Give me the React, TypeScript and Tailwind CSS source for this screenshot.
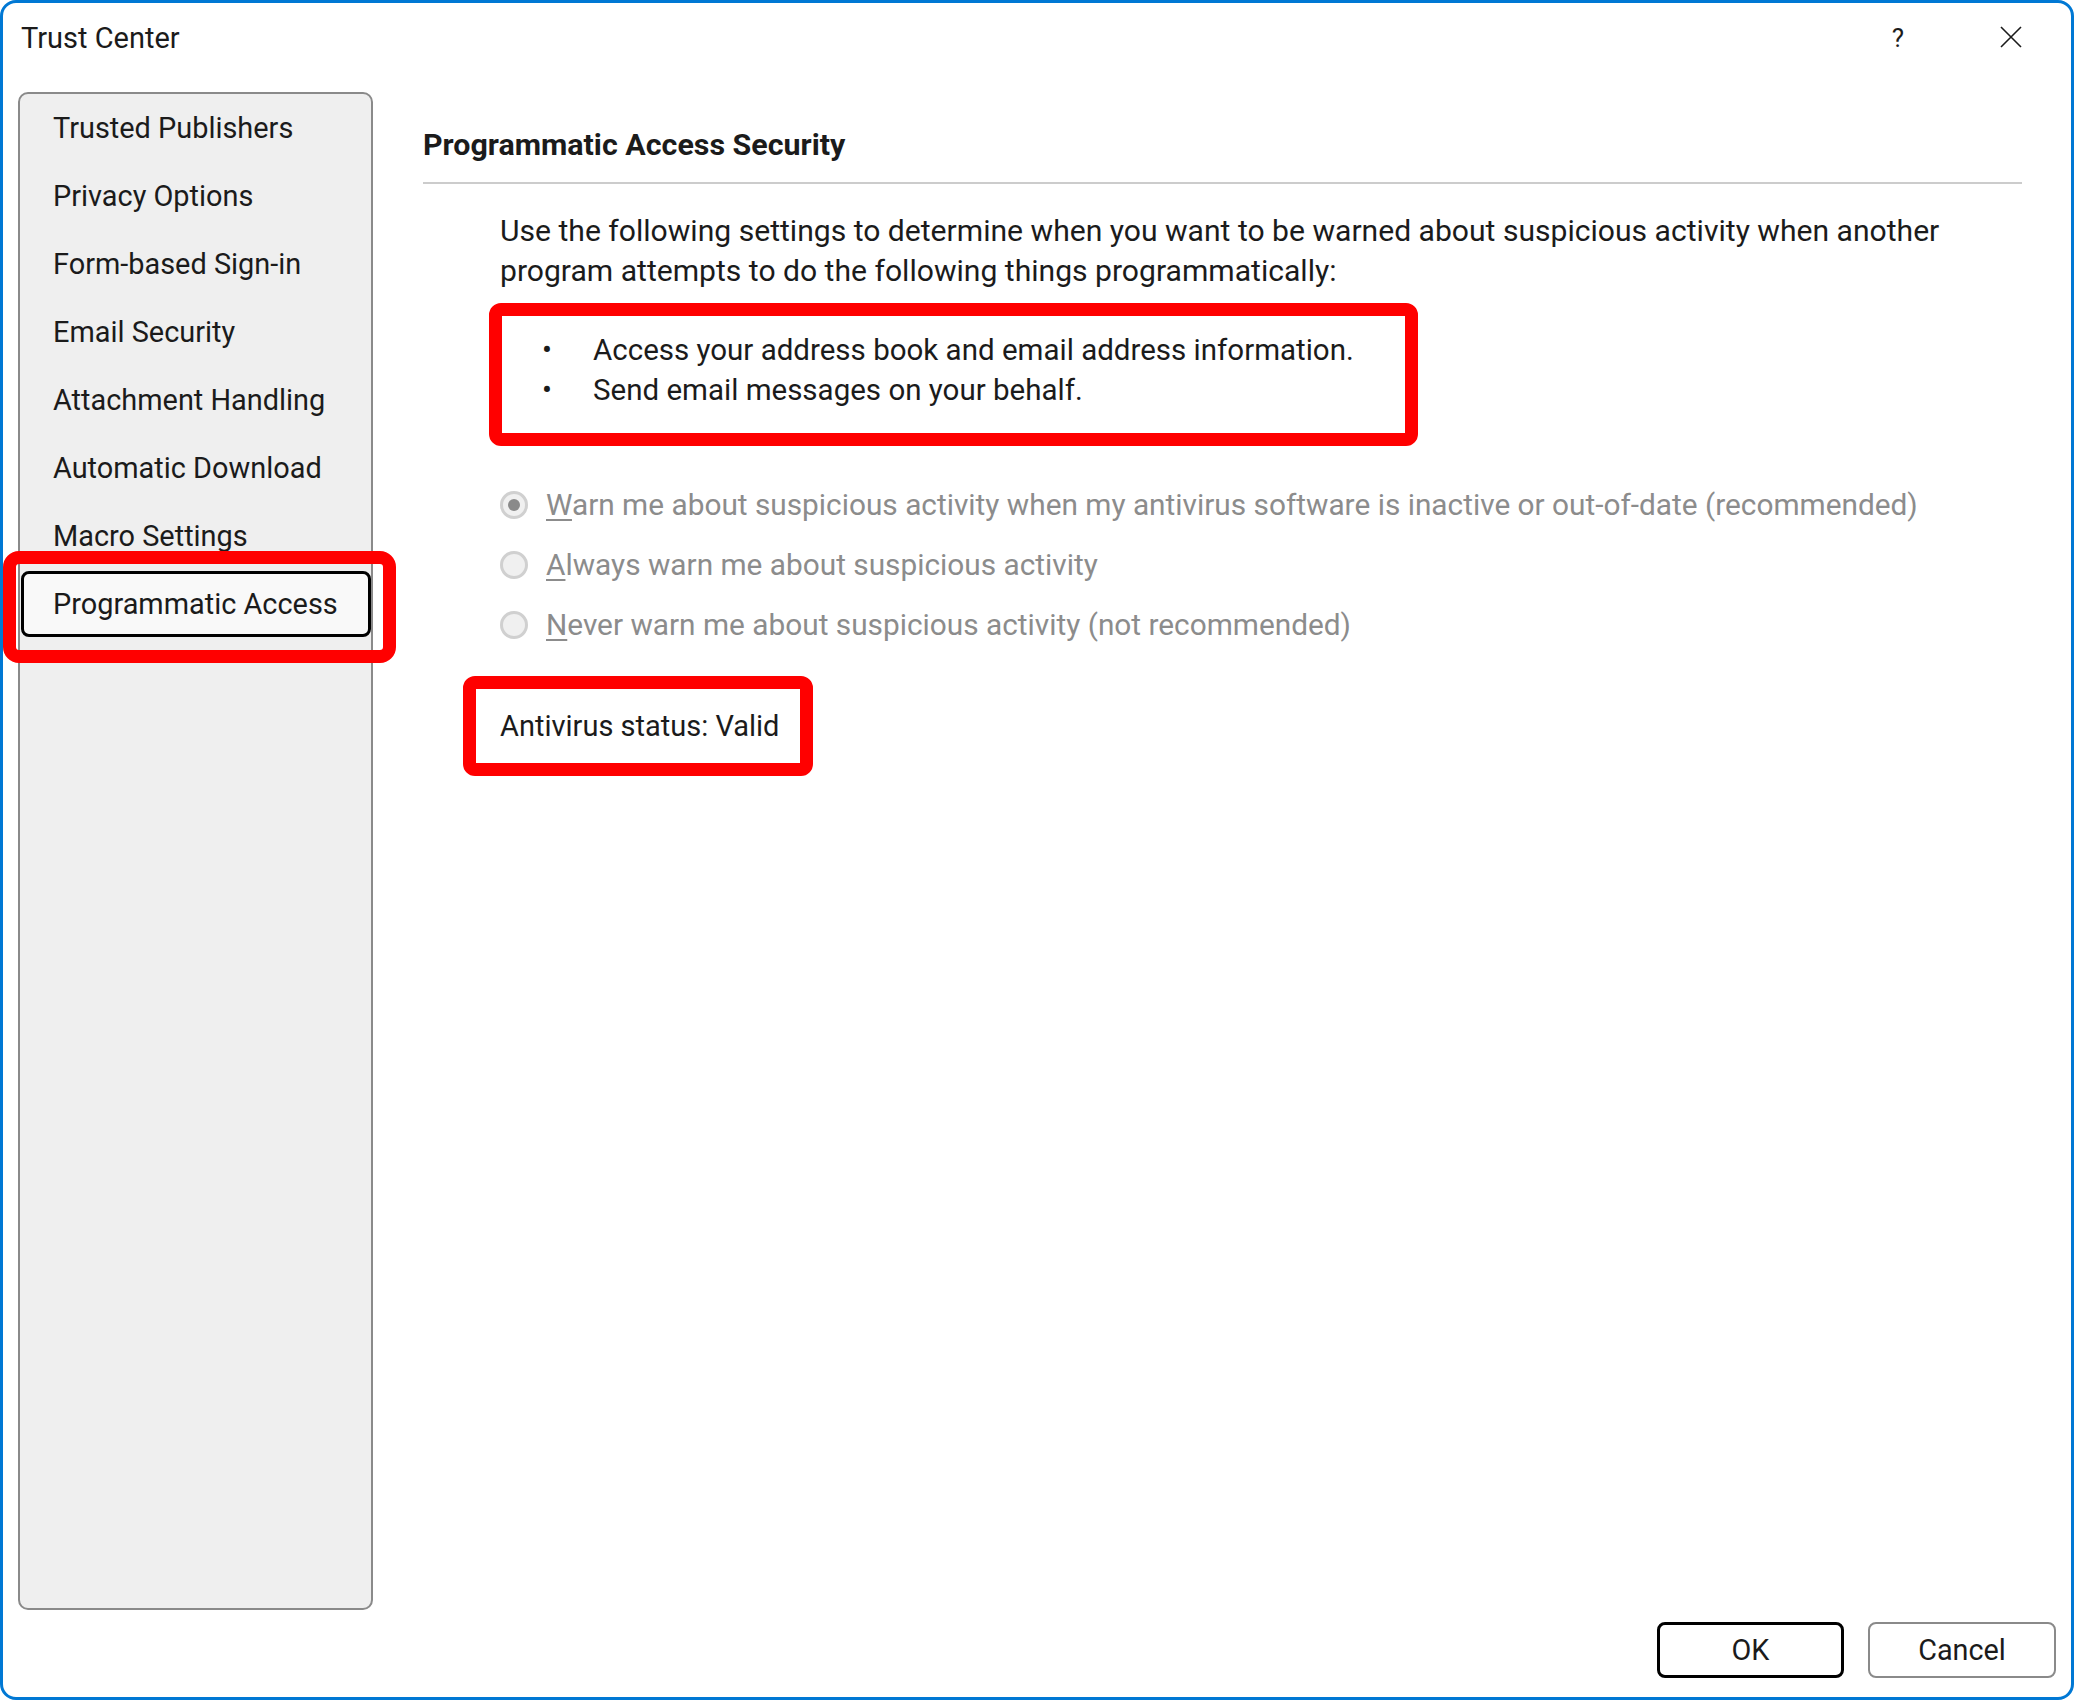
import React from "react";

const FONT = { fontFamily: "Roboto, 'Noto Sans', Arial, sans-serif" };

const sections = [
  "Trusted Publishers",
  "Privacy Options",
  "Form-based Sign-in",
  "Email Security",
  "Attachment Handling",
  "Automatic Download",
  "Macro Settings",
  "Programmatic Access",
];

const options = [
  { key: "W", rest: "arn me about suspicious activity when my antivirus software is inactive or out-of-date (recommended)", checked: true },
  { key: "A", rest: "lways warn me about suspicious activity", checked: false },
  { key: "N", rest: "ever warn me about suspicious activity (not recommended)", checked: false },
];

function Radio({ checked }: { checked: boolean }) {
  return (
    <span className="flex h-[28px] w-[28px] shrink-0 items-center justify-center rounded-full border-[3px] border-[#d0d0d0] bg-[#f0f0f0]">
      {checked && <span className="h-[12px] w-[12px] rounded-full bg-[#8a8a8a]" />}
    </span>
  );
}

export default function App() {
  return (
    <div
      className="relative flex h-[1700px] w-[2074px] flex-col overflow-hidden rounded-[16px] border-[3px] border-[#0078d4] bg-white text-[29.5px] leading-[40px] text-[#1b1b1b]"
      style={FONT}
    >
      {/* title bar */}
      <div className="flex h-[89px] shrink-0 items-start justify-between pl-[18px] pt-[15px]">
        <span className="text-[29px]">Trust Center</span>
        <div className="flex items-start pt-[8px]">
          <span className="mr-[96px] -mt-[8px] text-[26px]">?</span>
          <svg width="22" height="22" viewBox="0 0 22 22" className="mr-[49px]">
            <path d="M1 1 L21 21 M21 1 L1 21" stroke="#1b1b1b" strokeWidth="1.6" />
          </svg>
        </div>
      </div>

      {/* main area */}
      <div className="flex h-[1518px] shrink-0 pl-[15px]">
        <nav className="h-[1518px] w-[355px] shrink-0 rounded-[10px] border-2 border-[#8a8a8a] bg-[#efefef] text-[28.9px]">
          {sections.map((s) => {
            const active = s === "Programmatic Access";
            return (
              <div key={s} className="h-[68px] py-[1px] pl-[1px]">
                <div
                  className={
                    active
                      ? "flex h-[66px] items-center rounded-[8px] border-[3px] border-black bg-[#f9f9f9] pl-[29px]"
                      : "flex h-[66px] items-center rounded-[8px] border-[3px] border-transparent pl-[29px]"
                  }
                >
                  {s}
                </div>
              </div>
            );
          })}
        </nav>

        <section className="flex flex-1 flex-col pl-[50px] pr-[49px]">
          <h2 className="mt-[33px] text-[30.4px] font-bold">Programmatic Access Security</h2>
          <div className="mt-[17px] h-[2px] bg-[#cccccc]" />

          <p className="mt-[27px] pl-[77px] text-[30.1px]">
            Use the following settings to determine when you want to be warned about suspicious activity when another
            <br />
            program attempts to do the following things programmatically:
          </p>

          <div className="ml-[66px] mt-[12px] h-[143px] w-[929px] rounded-[12px] border-[13px] border-[#ff0000] pt-[14px]">
            <ul>
              <li className="flex">
                <span className="w-[91px] pl-[40px]">•</span>
                <span>Access your address book and email address information.</span>
              </li>
              <li className="flex">
                <span className="w-[91px] pl-[40px]">•</span>
                <span>Send email messages on your behalf.</span>
              </li>
            </ul>
          </div>

          <div className="ml-[77px] mt-[29px] flex flex-col text-[29.8px]">
            {options.map((o) => (
              <label key={o.key} className="flex h-[60px] items-center gap-[18px] text-[#8c8c8c]">
                <Radio checked={o.checked} />
                <span>
                  <span className="underline decoration-[2px] underline-offset-[4px]">{o.key}</span>
                  {o.rest}
                </span>
              </label>
            ))}
          </div>

          <div className="ml-[40px] mt-[21px] flex h-[100px] w-[350px] items-center rounded-[12px] border-[13px] border-[#ff0000] pl-[24px] text-[29px]">
            Antivirus status: Valid
          </div>
        </section>
      </div>

      {/* footer buttons */}
      <div className="flex flex-1 items-start justify-end gap-[24px] pr-[15px] pt-[12px] text-[28.8px]">
        <button className="flex h-[56px] w-[187px] items-center justify-center rounded-[8px] border-[3px] border-black bg-white">
          OK
        </button>
        <button className="flex h-[56px] w-[188px] items-center justify-center rounded-[8px] border-2 border-[#8a8a8a] bg-white">
          Cancel
        </button>
      </div>

      {/* highlight around the selected section */}
      <div className="pointer-events-none absolute left-0 top-[548px] h-[112px] w-[393px] rounded-[16px] border-[13px] border-[#ff0000]" />
    </div>
  );
}
